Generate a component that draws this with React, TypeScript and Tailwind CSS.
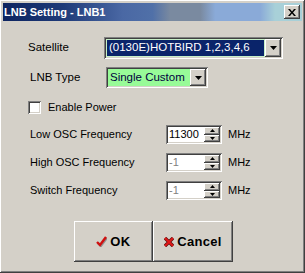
const raised =
  "shadow-[inset_-1px_-1px_#404040,inset_1px_1px_#ffffff,inset_-2px_-2px_#808080,inset_2px_2px_#d4d0c8]";
const sunken =
  "shadow-[inset_1px_1px_#808080,inset_-1px_-1px_#ffffff,inset_2px_2px_#404040,inset_-2px_-2px_#d4d0c8]";

const DownArrow = () => (
  <svg width="7" height="4" viewBox="0 0 7 4">
    <path d="M0 0h7L3.5 4z" fill="#000" />
  </svg>
);

const Combo = ({ text, w, h, field }: { text: string; w: string; h: string; field: string }) => (
  <div className={`${w} ${h} ${sunken} bg-white p-[2px] flex`}>
    <div className={`flex-1 flex items-center pl-[2px] ${field}`}>{text}</div>
    <div className={`w-[16px] ${raised} bg-[#d4d0c8] flex items-center justify-center`}>
      <DownArrow />
    </div>
  </div>
);

const Spin = ({ value, dim }: { value: string; dim?: boolean }) => (
  <div className={`w-[56px] h-[19px] ${sunken} bg-white p-[2px] flex`}>
    <div className={`flex-1 flex items-center pl-[1px] ${dim ? "text-[#808080]" : "text-black"}`}>{value}</div>
    <div className="w-[16px] flex flex-col">
      <div className={`flex-1 ${raised} bg-[#d4d0c8] flex items-center justify-center`}>
        <svg width="5" height="3" viewBox="0 0 5 3">
          <path d="M2.5 0L5 3H0z" fill="#000" />
        </svg>
      </div>
      <div className={`flex-1 ${raised} bg-[#d4d0c8] flex items-center justify-center`}>
        <svg width="5" height="3" viewBox="0 0 5 3">
          <path d="M0 0h5L2.5 3z" fill="#000" />
        </svg>
      </div>
    </div>
  </div>
);

const FreqRow = ({ label, value, dim, mt }: { label: string; value: string; dim?: boolean; mt: string }) => (
  <div className={`flex items-center h-[19px] ${mt} pl-[30px]`}>
    <span className="w-[136px]">{label}</span>
    <Spin value={value} dim={dim} />
    <span className="ml-[6px]">MHz</span>
  </div>
);

export default function App() {
  return (
    <div
      className={`w-[305px] h-[273px] bg-[#d4d0c8] p-[3px] ${raised} text-[11px] text-black flex flex-col`}
      style={{ fontFamily: '"Liberation Sans", Arial, sans-serif' }}
    >
      <div className="h-[18px] flex items-center justify-between pl-[1px] pr-[2px] bg-[linear-gradient(90deg,#0d2460_0%,#1e3a78_20%,#4a68a4_40%,#5070a8_50%,#7a8aa0_56%,#7a8aa0_66%,#8aaad8_71%,#8aaad8_86%,#a8d0d8_91%,#a8d0d8_100%)]">
        <span className="text-white font-bold text-[11px]">LNB Setting - LNB1</span>
        <div className={`w-[16px] h-[14px] ${raised} bg-[#d4d0c8] flex items-center justify-center`}>
          <svg width="8" height="7" viewBox="0 0 8 7">
            <path d="M0 0h2l2 2.5L6 0h2L5 3.5 8 7H6L4 4.5 2 7H0l3-3.5z" fill="#000" />
          </svg>
        </div>
      </div>

      <div className="flex items-center h-[22px] mt-[16px] pl-[25px]">
        <span className="w-[76px] text-[11.5px]">Satellite</span>
        <Combo text="(0130E)HOTBIRD 1,2,3,4,6" w="w-[179px]" h="h-[22px]" field="bg-[#0a246a] text-white text-[11.5px] border border-[#c8f0c8]" />
      </div>

      <div className="flex items-center h-[21px] mt-[8px] pl-[27px]">
        <span className="w-[76px] text-[11.5px]">LNB Type</span>
        <Combo text="Single Custom" w="w-[102px]" h="h-[21px]" field="bg-[#98fb98] text-[#000040] text-[11.5px]" />
      </div>

      <div className="flex items-center h-[13px] mt-[13px] pl-[25px]">
        <div className={`w-[13px] h-[13px] ${sunken} bg-white`} />
        <span className="ml-[7px]">Enable Power</span>
      </div>

      <div className="-ml-[3px]">
        <FreqRow label="Low OSC Frequency" value="11300" mt="mt-[11px]" />
        <FreqRow label="High OSC Frequency" value="-1" dim mt="mt-[9px]" />
        <FreqRow label="Switch Frequency" value="-1" dim mt="mt-[9px]" />
      </div>

      <div className="flex mt-[21px] pl-[71px] text-[13px] font-bold">
        <div className={`w-[79px] h-[41px] ${raised} bg-[#d4d0c8] flex items-center justify-center gap-[3px]`}>
          <svg width="11" height="11" viewBox="0 0 11 11">
            <path d="M1 6l3 3 6-8" stroke="#909090" strokeWidth="2.6" fill="none" transform="translate(0.8 0.8)" />
            <path d="M1 6l3 3 6-8" stroke="#d01010" strokeWidth="2.4" fill="none" />
          </svg>
          <span className="tracking-[0.5px]">OK</span>
        </div>
        <div className={`w-[80px] h-[41px] ${raised} bg-[#d4d0c8] flex items-center justify-center gap-[3px]`}>
          <svg width="10" height="10" viewBox="0 0 10 10">
            <path d="M1 1l8 8M9 1l-8 8" stroke="#601010" strokeWidth="3.4" />
            <path d="M1 1l8 8M9 1l-8 8" stroke="#e01818" strokeWidth="2" />
          </svg>
          <span className="tracking-[0.3px]">Cancel</span>
        </div>
      </div>
    </div>
  );
}
